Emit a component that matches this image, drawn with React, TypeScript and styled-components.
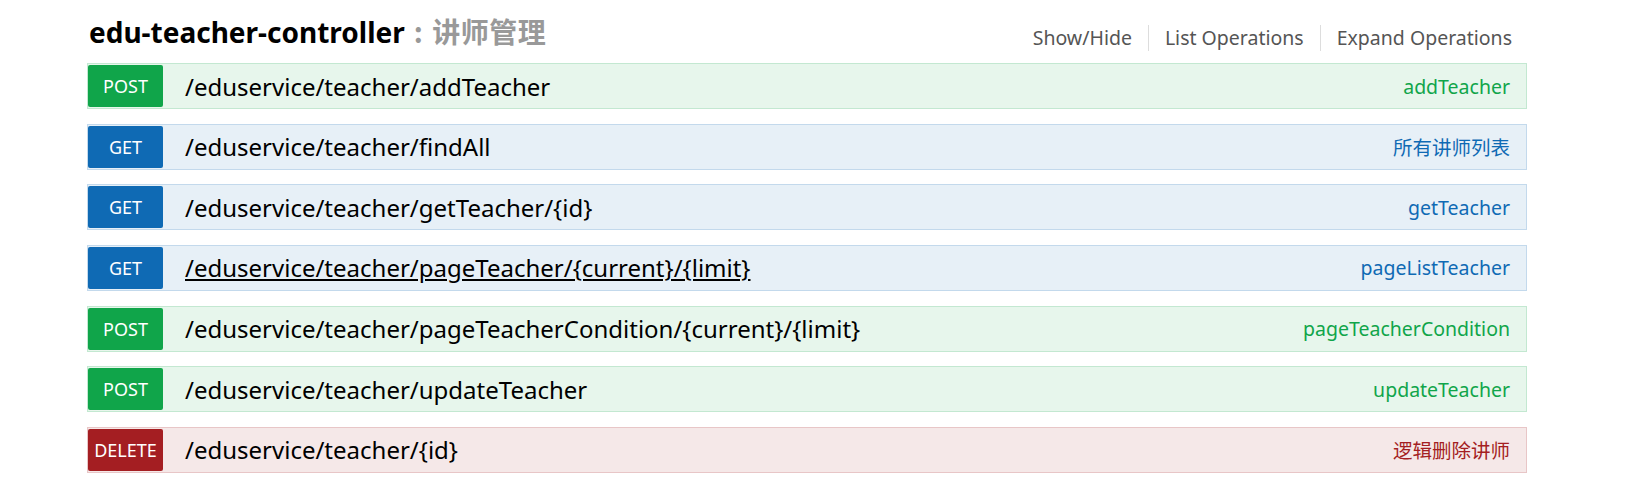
import React from "react";
import styled, { createGlobalStyle } from "styled-components";

const Global = createGlobalStyle`
  html, body { margin: 0; padding: 0; background: #ffffff; }
  body { font-family: "Noto Sans", "Noto Sans CJK SC", sans-serif; }
`;

type Method = "POST" | "GET" | "DELETE";

const palette: Record<Method, { main: string; bg: string; border: string }> = {
  POST: { main: "#10a54a", bg: "#e7f6ec", border: "#c3e8d1" },
  GET: { main: "#0f6ab4", bg: "#e7f0f7", border: "#c3d9ec" },
  DELETE: { main: "#a41e22", bg: "#f5e8e8", border: "#e8c6c7" },
};

const Page = styled.div`
  width: 1440px;
  padding: 0 0 20px 87px;
`;

const Header = styled.div`
  display: flex;
  justify-content: space-between;
  align-items: flex-start;
  height: 63px;
`;

const Title = styled.h2`
  margin: 12px 0 0 2px;
  font-family: "Noto Sans", "Noto Sans CJK SC", sans-serif;
  font-size: 28px;
  line-height: 38px;
  font-weight: 700;
  color: #000;
  white-space: nowrap;
`;

const Sub = styled.span`
  color: #999999;
  font-family: "Noto Sans CJK SC", sans-serif;
  margin-left: 9px;
  letter-spacing: 0.5px;
`;

const Colon = styled.span`
  margin-right: 9px;
`;

const Options = styled.ul`
  display: flex;
  list-style: none;
  margin: 25px 0 0 0;
  padding: 0 15px 0 0;
`;

const Option = styled.li`
  font-family: "Noto Sans", sans-serif;
  font-size: 19.5px;
  color: #555555;
  padding: 0 16px;
  line-height: 26px;
  border-right: 1px solid #dddddd;
  &:last-child {
    padding-right: 0;
    border-right: none;
  }
`;

const List = styled.div`
  display: flex;
  flex-direction: column;
  gap: 14.67px;
`;

const Row = styled.div<{ $m: Method }>`
  display: flex;
  align-items: center;
  height: 46px;
  box-sizing: border-box;
  border: 1px solid ${(p) => palette[p.$m].border};
  background: ${(p) => palette[p.$m].bg};
  padding: 1px 16px 1px 0;
`;

const Badge = styled.span<{ $m: Method }>`
  flex: 0 0 75px;
  height: 42px;
  display: flex;
  align-items: center;
  justify-content: center;
  background: ${(p) => palette[p.$m].main};
  color: #ffffff;
  border-radius: 2px;
  font-family: "Noto Sans", sans-serif;
  font-size: 18px;
`;

const Path = styled.span<{ $u?: boolean }>`
  margin-left: 22px;
  font-family: "Noto Sans", sans-serif;
  font-size: 24px;
  color: #000;
  text-decoration: ${(p) => (p.$u ? "underline" : "none")};
  text-underline-offset: 2px;
  flex: 1;
`;

const Summary = styled.span<{ $m: Method }>`
  font-family: "Noto Sans", "Noto Sans CJK SC", sans-serif;
  font-size: 19.5px;
  color: ${(p) => palette[p.$m].main};
`;

const ops: { m: Method; path: string; summary: string; u?: boolean }[] = [
  { m: "POST", path: "/eduservice/teacher/addTeacher", summary: "addTeacher" },
  { m: "GET", path: "/eduservice/teacher/findAll", summary: "所有讲师列表" },
  { m: "GET", path: "/eduservice/teacher/getTeacher/{id}", summary: "getTeacher" },
  { m: "GET", path: "/eduservice/teacher/pageTeacher/{current}/{limit}", summary: "pageListTeacher", u: true },
  { m: "POST", path: "/eduservice/teacher/pageTeacherCondition/{current}/{limit}", summary: "pageTeacherCondition" },
  { m: "POST", path: "/eduservice/teacher/updateTeacher", summary: "updateTeacher" },
  { m: "DELETE", path: "/eduservice/teacher/{id}", summary: "逻辑删除讲师" },
];

export default function App() {
  return (
    <>
      <Global />
      <Page>
        <Header>
          <Title>
            edu-teacher-controller
            <Sub>
              <Colon>:</Colon>讲师管理
            </Sub>
          </Title>
          <Options>
            <Option>Show/Hide</Option>
            <Option>List Operations</Option>
            <Option>Expand Operations</Option>
          </Options>
        </Header>
        <List>
          {ops.map((o) => (
            <Row key={o.path + o.m} $m={o.m}>
              <Badge $m={o.m}>{o.m}</Badge>
              <Path $u={o.u}>{o.path}</Path>
              <Summary $m={o.m}>{o.summary}</Summary>
            </Row>
          ))}
        </List>
      </Page>
    </>
  );
}
